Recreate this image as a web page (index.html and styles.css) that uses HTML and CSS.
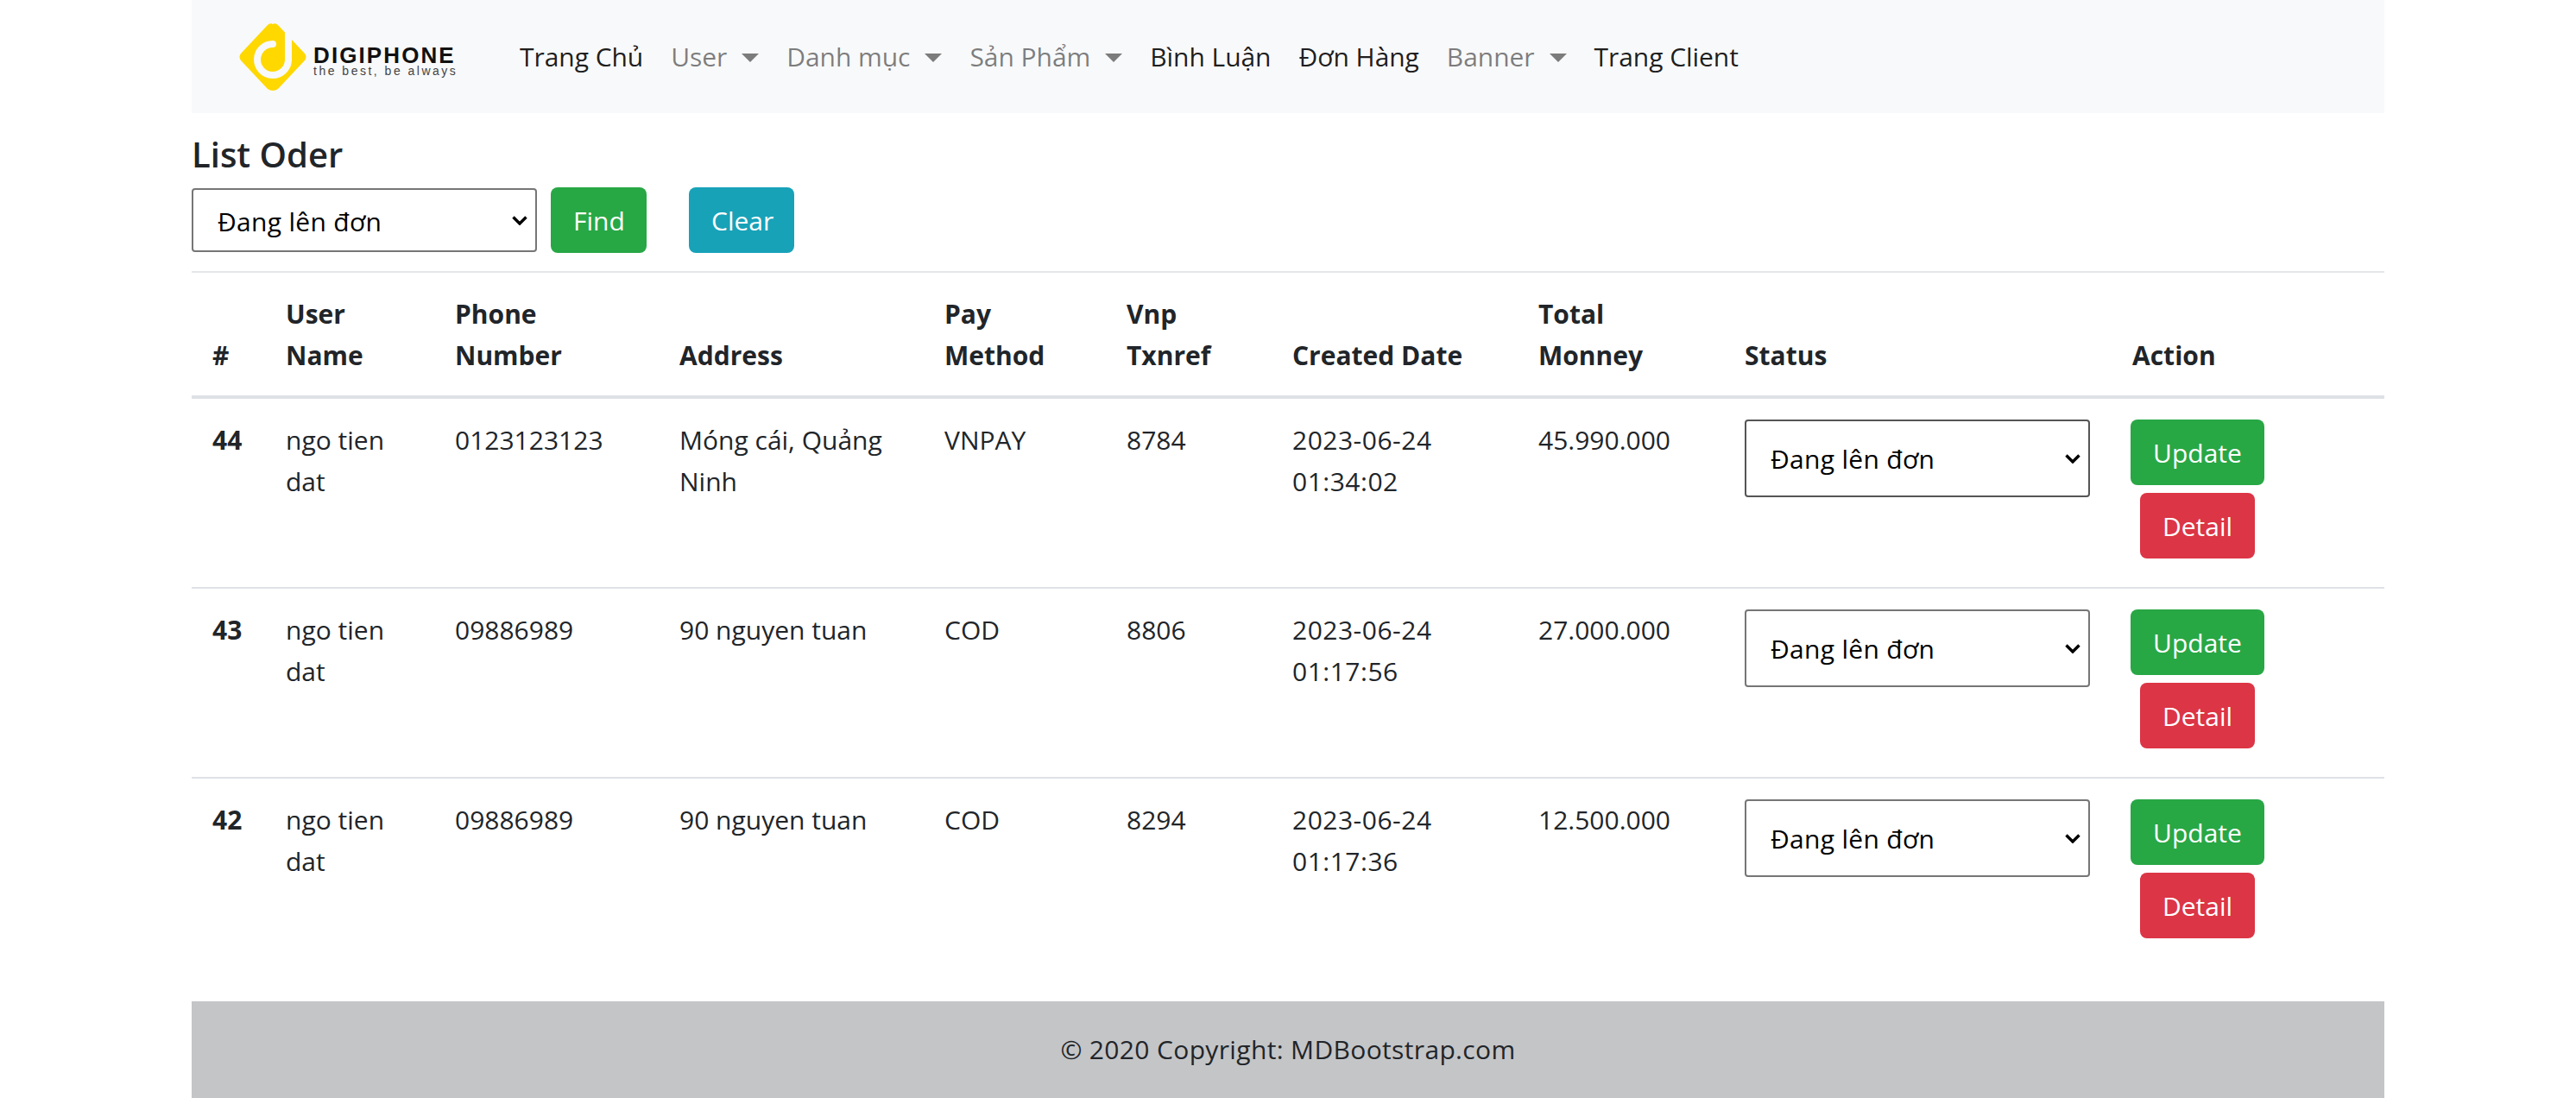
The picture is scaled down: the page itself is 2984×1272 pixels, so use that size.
FILE: index.html
```html
<!DOCTYPE html>
<html lang="en">
<head>
<meta charset="UTF-8">
<title>List Oder</title>
<link rel="stylesheet" href="styles.css">
</head>
<body>
<div class="container">
    <nav class="navbar">
        <a class="brand" href="#">
            <svg class="brand-mark" width="80" height="80" viewBox="0 0 80 80">
                <path d="M40 2 Q43 0 46 3 L77 36 Q80 40 77 44 L46 77 Q40 81 34 77 L3 44 Q0 40 3 36 L34 3 Q37 0 40 2 Z" fill="#ffd800"/>
                <path d="M58 12 V44 A18 18 0 1 1 40 25" fill="none" stroke="#f8f9fa" stroke-width="8" stroke-linecap="round"/>
            </svg>
            <span class="brand-text">
                <span class="brand-name">DIGIPHONE</span>
                <span class="brand-tag">the best, be always</span>
            </span>
        </a>
        <a class="nav-link" href="#">Trang Chủ</a>
        <a class="nav-link muted caret" href="#">User</a>
        <a class="nav-link muted caret" href="#">Danh mục</a>
        <a class="nav-link muted caret" href="#">Sản Phẩm</a>
        <a class="nav-link" href="#">Bình Luận</a>
        <a class="nav-link" href="#">Đơn Hàng</a>
        <a class="nav-link muted caret" href="#">Banner</a>
        <a class="nav-link" href="#">Trang Client</a>
    </nav>

    <h4 class="title">List Oder</h4>
    <form class="filter">
        <select class="select"><option>Đang lên đơn</option></select>
        <button class="btn green" type="button">Find</button>
        <button class="btn teal" type="button">Clear</button>
    </form>
    <hr class="divider">

    <table class="orders">
        <colgroup>
            <col class="c-id"><col class="c-user"><col class="c-phone"><col class="c-addr"><col class="c-pay">
            <col class="c-vnp"><col class="c-date"><col class="c-total"><col class="c-status"><col class="c-action">
        </colgroup>
        <thead>
            <tr>
                <th>#</th>
                <th>User Name</th>
                <th>Phone Number</th>
                <th>Address</th>
                <th>Pay Method</th>
                <th>Vnp Txnref</th>
                <th>Created Date</th>
                <th>Total Monney</th>
                <th>Status</th>
                <th>Action</th>
            </tr>
        </thead>
        <tbody>
            <tr>
                <th>44</th>
                <td>ngo tien dat</td>
                <td>0123123123</td>
                <td>Móng cái, Quảng Ninh</td>
                <td>VNPAY</td>
                <td>8784</td>
                <td class="date">2023-06-24 01:34:02</td>
                <td>45.990.000</td>
                <td><select class="select tall dark"><option>Đang lên đơn</option></select></td>
                <td class="actions">
                    <button class="btn green" type="button">Update</button>
                    <button class="btn red" type="button">Detail</button>
                </td>
            </tr>
            <tr>
                <th>43</th>
                <td>ngo tien dat</td>
                <td>09886989</td>
                <td>90 nguyen tuan</td>
                <td>COD</td>
                <td>8806</td>
                <td class="date">2023-06-24 01:17:56</td>
                <td>27.000.000</td>
                <td><select class="select tall"><option>Đang lên đơn</option></select></td>
                <td class="actions">
                    <button class="btn green" type="button">Update</button>
                    <button class="btn red" type="button">Detail</button>
                </td>
            </tr>
            <tr>
                <th>42</th>
                <td>ngo tien dat</td>
                <td>09886989</td>
                <td>90 nguyen tuan</td>
                <td>COD</td>
                <td>8294</td>
                <td class="date">2023-06-24 01:17:36</td>
                <td>12.500.000</td>
                <td><select class="select tall"><option>Đang lên đơn</option></select></td>
                <td class="actions">
                    <button class="btn green" type="button">Update</button>
                    <button class="btn red" type="button">Detail</button>
                </td>
            </tr>
        </tbody>
    </table>

    <footer class="footer">© 2020 Copyright: MDBootstrap.com</footer>
</div>
</body>
</html>
```

FILE: styles.css
```css
* {
    box-sizing: border-box;
}
body {
    margin: 0;
    font-family: "Open Sans", sans-serif;
    font-size: 30px;
    line-height: 48px;
    color: #212529;
    background-color: #fff;
}
.container {
    width: 2540px;
    margin: 0 auto;
}
.navbar {
    display: flex;
    align-items: center;
    height: 131px;
    padding-left: 54px;
    background-color: #f8f9fa;
}
.brand {
    display: flex;
    align-items: center;
    width: 310px;
    text-decoration: none;
}
.brand-mark {
    flex: none;
}
.brand-text {
    display: flex;
    flex-direction: column;
    margin-left: 7px;
    margin-top: 8px;
}
.brand-name {
    font-family: "Liberation Sans", sans-serif;
    font-weight: bold;
    font-size: 26px;
    line-height: 24px;
    letter-spacing: 2.1px;
    color: #111;
}
.brand-tag {
    font-family: "Liberation Sans", sans-serif;
    font-size: 14px;
    line-height: 12px;
    letter-spacing: 2.5px;
    color: #444;
}
.nav-link {
    padding: 0 16px;
    letter-spacing: -0.05px;
    color: rgba(0, 0, 0, 0.9);
    text-decoration: none;
}
.muted {
    color: rgba(0, 0, 0, 0.5);
}
.caret::after {
    content: "";
    display: inline-block;
    margin-left: 17px;
    vertical-align: 5px;
    border-top: 10px solid rgba(0, 0, 0, 0.5);
    border-left: 10px solid transparent;
    border-right: 10px solid transparent;
}
.title {
    margin: 24px 0 14px;
    font-size: 40px;
    line-height: 48px;
    font-weight: 600;
}
.filter {
    display: flex;
    align-items: center;
}
.select {
    appearance: none;
    width: 400px;
    height: 74px;
    padding: 2px 40px 0 28px;
    font-family: inherit;
    font-size: 30px;
    letter-spacing: 0.3px;
    color: #000;
    background-color: #fff;
    background-image: url("data:image/svg+xml,%3Csvg xmlns='http://www.w3.org/2000/svg' width='18' height='11' viewBox='0 0 18 11'%3E%3Cpath d='M1.5 1.5 L9 9 L16.5 1.5' fill='none' stroke='%23000' stroke-width='3.4'/%3E%3C/svg%3E");
    background-repeat: no-repeat;
    background-position: right 9px center;
    border: 2px solid #767676;
    border-radius: 4px;
}
.select.tall {
    height: 90px;
    padding: 0 40px 0 28px;
}
.select.dark {
    border-color: #555;
}
.btn {
    height: 76px;
    padding: 0 26px;
    font-family: inherit;
    font-size: 30px;
    color: #fff;
    border: none;
    border-radius: 8px;
}
.green {
    background-color: #28a745;
}
.teal {
    background-color: #17a2b8;
}
.red {
    background-color: #dc3545;
}
.filter .green {
    margin-left: 16px;
    width: 111px;
}
.filter .teal {
    margin-left: 49px;
    width: 122px;
}
.divider {
    margin: 21px 0 0;
    border: none;
    border-top: 2px solid #e4e6e9;
}
.orders {
    width: 100%;
    table-layout: fixed;
    border-collapse: collapse;
}
.c-id { width: 85px; }
.c-user { width: 196px; }
.c-phone { width: 260px; }
.c-addr { width: 307px; }
.c-pay { width: 211px; }
.c-vnp { width: 192px; }
.c-date { width: 285px; }
.c-total { width: 239px; }
.c-status { width: 449px; }
.c-action { width: 316px; }
.orders th,
.orders td {
    padding: 24px;
    text-align: left;
    vertical-align: top;
    font-weight: normal;
    border-top: 2px solid #dee2e6;
}
.orders th {
    font-weight: bold;
}
.orders thead th {
    padding-bottom: 22px;
    vertical-align: bottom;
    border-top: none;
    border-bottom: 4px solid #dee2e6;
}
.orders tbody tr:first-child th,
.orders tbody tr:first-child td {
    border-top: none;
}
.orders .date {
    letter-spacing: 0.5px;
}
.orders .actions {
    padding-left: 22px;
}
.actions .btn {
    display: block;
}
.actions .green {
    width: 155px;
}
.actions .red {
    width: 133px;
    margin: 9px 0 9px 11px;
}
.footer {
    margin-top: 40px;
    height: 112px;
    line-height: 112px;
    letter-spacing: 0.35px;
    text-align: center;
    background-color: #c4c5c7;
}
```
